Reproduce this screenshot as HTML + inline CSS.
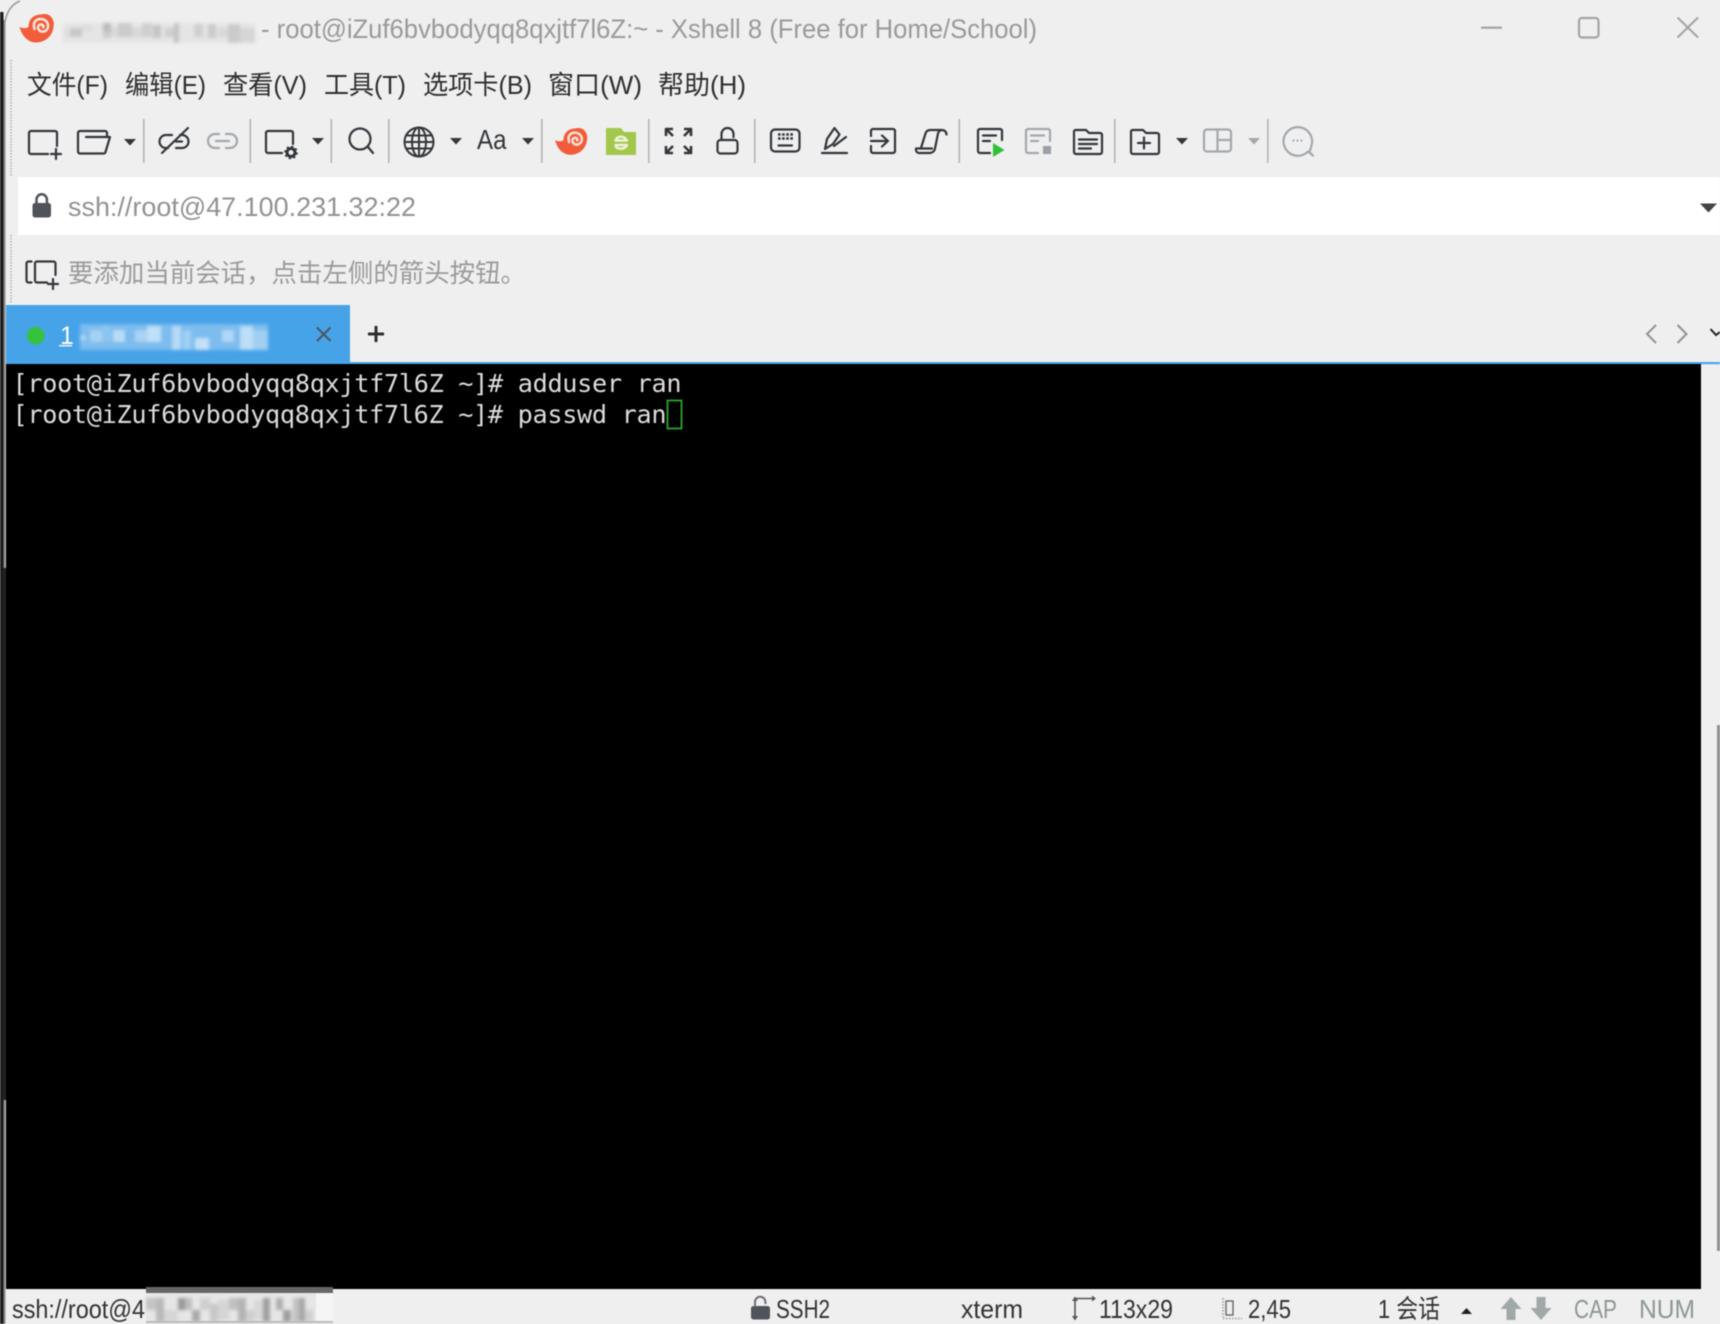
<!DOCTYPE html>
<html lang="zh"><head><meta charset="utf-8"><title>Xshell 8</title>
<style>
html,body{margin:0;padding:0;background:#efefef;width:1720px;height:1324px;overflow:hidden}
svg{display:block;filter:blur(.55px)}
text{font-family:"Liberation Sans","Noto Sans CJK SC",sans-serif}
.m text{font-size:26px;fill:#2e2e2e}
.i{fill:none;stroke:#33363b;stroke-width:2.2;stroke-linecap:round;stroke-linejoin:round}
.g{fill:none;stroke:#a3a8ad;stroke-width:2.2;stroke-linecap:round;stroke-linejoin:round}
.s{fill:#b5b5b5}
.t text{font-family:"DejaVu Sans Mono","Liberation Mono",monospace;font-size:25.2px;fill:#dcdcdc;white-space:pre}
.b text{font-size:26px;fill:#333}
.mz{filter:blur(1.6px)}
</style></head><body>
<svg xmlns="http://www.w3.org/2000/svg" width="1720" height="1324" viewBox="0 0 1720 1324">
<rect width="1720" height="1324" fill="#efefef"/>
<!-- left edge -->
<rect x="0" y="12" width="3.5" height="1312" fill="#1c1c1c"/>
<rect x="3.5" y="20" width="2" height="548" fill="#8a8a8a"/>
<rect x="3.5" y="568" width="2.5" height="532" fill="#222"/>
<rect x="3.5" y="1100" width="2" height="224" fill="#8a8a8a"/>
<path d="M5 22C7 11 12 4 20 1" fill="none" stroke="#999" stroke-width="1.5"/>
<line x1="11" y1="60" x2="11" y2="176" stroke="#bdbdbd" stroke-width="2" stroke-dasharray="1.5 1.5"/>
<line x1="11" y1="235" x2="11" y2="304" stroke="#bdbdbd" stroke-width="2" stroke-dasharray="1.5 1.5"/>

<!-- title -->
<g id="snail">
<path d="M19.5 27C23 28.5 26 28.5 28.5 27C28.5 19 34 14.5 41 14.5C44 13.5 47 14 49 15C53 18 54.5 22 53.5 27C52.5 36 45 42.5 36 42.5C28 42.5 22 36 19.5 27Z" fill="#f25c3b"/>
<path d="M34.5 29C32 21 38 17.500 43.500 19.500C49.500 21.500 49.500 30 44 31.500C39 32.500 36.500 27.500 39 25.200C41 23.500 44 25 43.200 27.200" fill="none" stroke="#fbe3da" stroke-width="2.6" stroke-linecap="round"/>
</g>
<g class="mz">
<rect x="63" y="23" width="192" height="20" fill="#e5e5e5"/>
<rect x="64" y="28" width="9" height="9" fill="#dedede"/><rect x="70" y="28" width="12" height="9" fill="#c9c9c9"/><rect x="82" y="24" width="10" height="8" fill="#dedede"/>
<rect x="103" y="23" width="8" height="8" fill="#bcbcbc"/><rect x="103" y="31" width="8" height="7" fill="#cccccc"/><rect x="111" y="28" width="8" height="8" fill="#d8d8d8"/><rect x="118" y="23" width="14" height="14" fill="#cbcbcb"/><rect x="132" y="28" width="10" height="9" fill="#d8d8d8"/>
<rect x="142" y="23" width="10" height="14" fill="#cfcfcf"/><rect x="153" y="25" width="8" height="13" fill="#c6c6c6"/><rect x="165" y="28" width="9" height="9" fill="#cecece"/><rect x="174" y="23" width="5" height="20" fill="#c4c4c4"/>
<rect x="194" y="24" width="9" height="13" fill="#d0d0d0"/><rect x="208" y="24" width="8" height="14" fill="#cbcbcb"/><rect x="218" y="28" width="10" height="9" fill="#d8d8d8"/><rect x="228" y="24" width="12" height="19" fill="#cbcbcb"/><rect x="240" y="28" width="15" height="15" fill="#d6d6d6"/>
</g>
<text x="261" y="38" font-size="27" fill="#9a9a9a" textLength="776" lengthAdjust="spacingAndGlyphs">- root@iZuf6bvbodyqq8qxjtf7l6Z:~ - Xshell 8 (Free for Home/School)</text>
<!-- window buttons -->
<line x1="1481" y1="27.7" x2="1502" y2="27.7" stroke="#a0a0a0" stroke-width="2.2"/>
<rect x="1579" y="18" width="19.5" height="19.5" rx="3" fill="none" stroke="#a4a4a4" stroke-width="2.2"/>
<path d="M1677.5 17.5L1698 37.5M1698 17.5L1677.5 37.5" stroke="#a4a4a4" stroke-width="2" fill="none"/>

<!-- menu -->
<g class="m">
<text x="27" y="94" textLength="81" lengthAdjust="spacingAndGlyphs">文件(F)</text>
<text x="125" y="94" textLength="81" lengthAdjust="spacingAndGlyphs">编辑(E)</text>
<text x="223" y="94" textLength="84" lengthAdjust="spacingAndGlyphs">查看(V)</text>
<text x="324" y="94" textLength="82" lengthAdjust="spacingAndGlyphs">工具(T)</text>
<text x="423" y="94" textLength="109" lengthAdjust="spacingAndGlyphs">选项卡(B)</text>
<text x="548" y="94" textLength="94" lengthAdjust="spacingAndGlyphs">窗口(W)</text>
<text x="658" y="94" textLength="88" lengthAdjust="spacingAndGlyphs">帮助(H)</text>
</g>

<!-- toolbar separators -->
<g class="s">
<rect x="143" y="119" width="1.6" height="44"/><rect x="249.5" y="119" width="1.6" height="44"/><rect x="330.5" y="119" width="1.6" height="44"/><rect x="388" y="119" width="1.6" height="44"/><rect x="541" y="119" width="1.6" height="44"/><rect x="648" y="119" width="1.6" height="44"/><rect x="754" y="119" width="1.6" height="44"/><rect x="958.5" y="119" width="1.6" height="44"/><rect x="1114" y="119" width="1.6" height="44"/><rect x="1267" y="119" width="1.6" height="44"/>
</g>
<!-- arrows -->
<g fill="#33363b">
<polygon points="124,139 136,139 130,145.5"/><polygon points="312,138 324,138 318,144.5"/><polygon points="450,138 462,138 456,144.5"/><polygon points="522,138 534,138 528,144.5"/><polygon points="1176,138 1188,138 1182,144.5"/>
</g>
<polygon points="1248,138 1260,138 1254,144.5" fill="#a3a8ad"/>

<!-- new session -->
<path class="i" d="M57 146V133a2 2 0 0 0-2-2H31a2 2 0 0 0-2 2V152a2 2 0 0 0 2 2H48M56 149V159M51 154H61"/>
<!-- open folder -->
<path class="i" d="M80 153.5H103.5a2 2 0 0 0 2-1.5L110 137H86M80 153.5a2 2 0 0 1-2-2V133a2 2 0 0 1 2-2H105a2 2 0 0 1 2 2v4"/>
<!-- broken link -->
<path class="i" d="M172 135H166a6.5 6.5 0 0 0 0 13H168M176 148H182a6.5 6.5 0 0 0 0-13H180M162 153L188 128M176 141.5H182"/>
<!-- link -->
<path class="g" d="M219 134H215a7 7 0 0 0 0 14H219M226 134H230a7 7 0 0 1 0 14H226M216 141H229"/>
<!-- session settings -->
<path class="i" d="M293 144V133a2 2 0 0 0-2-2H268a2 2 0 0 0-2 2V151a2 2 0 0 0 2 2H282"/>
<circle cx="291" cy="152.5" r="4" fill="none" stroke="#33363b" stroke-width="3"/>
<circle cx="291" cy="152.5" r="6" fill="none" stroke="#33363b" stroke-width="1.6" stroke-dasharray="2.2 2.5"/>
<!-- search -->
<circle class="i" cx="360" cy="139" r="10.5"/><path class="i" d="M368 147L373 153"/>
<!-- globe -->
<g class="i" style="stroke-width:2"><circle cx="419" cy="142" r="14.5"/><ellipse cx="419" cy="142" rx="7" ry="14.5"/><path d="M405 142H433M407 135.5H431M407 148.5H431M419 127.5V156.5"/></g>
<!-- Aa -->
<text x="477" y="149" font-size="27.500" fill="#33363b" textLength="29.5" lengthAdjust="spacingAndGlyphs">Aa</text>
<!-- snail small -->
<g transform="translate(555 128) scale(.94) translate(-19.5 -14)">
<path d="M19.5 27C23 28.5 26 28.5 28.5 27C28.5 19 34 14.5 41 14.5C44 13.5 47 14 49 15C53 18 54.5 22 53.5 27C52.5 36 45 42.5 36 42.5C28 42.5 22 36 19.5 27Z" fill="#f25c3b"/>
<path d="M34.5 29C32 21 38 17.500 43.500 19.500C49.500 21.500 49.500 30 44 31.500C39 32.500 36.500 27.500 39 25.200C41 23.500 44 25 43.200 27.200" fill="none" stroke="#fbe3da" stroke-width="2.6" stroke-linecap="round"/>
</g>
<!-- green folder -->
<path d="M606 129a1 1 0 0 1 1-1H621l3 4H635a1 1 0 0 1 1 1V154a1 1 0 0 1-1 1H607a1 1 0 0 1-1-1Z" fill="#a3c64c"/>
<path d="M626.500 140C624 135.500 617 135.500 615.500 140.500H627M615.500 145H627C625 149.500 618.500 149.500 616 147" fill="none" stroke="#eef4d8" stroke-width="2.400" stroke-linecap="round" stroke-linejoin="round"/>
<!-- expand -->
<path class="i" style="stroke-width:2.6;stroke-linecap:butt" d="M666 136V129H673M666 129L673 136M684 129H691V136M691 129L684 136M666 146V153H673M666 153L673 146M691 146V153H684M691 153L684 146"/>
<!-- open lock -->
<rect class="i" x="717.500" y="140" width="20" height="13.500" rx="3"/>
<path class="i" d="M721.500 140V134a6 6 0 0 1 12 0V137"/>
<!-- keyboard -->
<rect class="i" x="771" y="129.500" width="28.500" height="22" rx="4"/>
<path d="M778 134.500H793M778 138.500H793" stroke="#33363b" stroke-width="2.6" stroke-dasharray="2.6 1.500" fill="none"/>
<path class="i" d="M778.500 145.500H792"/>
<!-- pen -->
<path class="i" d="M822 153H847M825 149L827 139L834.500 128L839.500 134.500L833 144ZM834 146L846 137"/>
<!-- enter -->
<path class="i" d="M871 136V131a2 2 0 0 1 2-2H893a2 2 0 0 1 2 2V151a2 2 0 0 1-2 2H873a2 2 0 0 1-2-2V146M871 141H887M882 135.500L888 141L882 146.500"/>
<!-- script -->
<path class="i" d="M921 148L925.500 133.500a5 5 0 0 1 4.500-3.500H942a4.500 4.500 0 0 1 4.500 4.500M942 130a4.500 4.500 0 0 0-4 3.500L935 148.500a5.500 5.500 0 0 1-5 4.500H919a3 3 0 0 1-3-3V148.500H932"/>
<!-- play doc -->
<path class="i" d="M990 153H980a2 2 0 0 1-2-2V131a2 2 0 0 1 2-2H1000a2 2 0 0 1 2 2V140M983 135.500H996M983 141H990"/>
<polygon points="993,143 1004.500,150 993,157" fill="#2fc238"/>
<!-- stop doc -->
<path class="g" d="M1038 153H1028a2 2 0 0 1-2-2V131a2 2 0 0 1 2-2H1048a2 2 0 0 1 2 2V141M1031 135.500H1044M1031 141H1038"/>
<rect x="1043" y="146" width="8" height="8" fill="#9aa0a6"/>
<!-- doc folder -->
<path class="i" d="M1074 152V131.500a1.500 1.500 0 0 1 1.500-1.500H1086l3 3H1100a2 2 0 0 1 2 2V152a2 2 0 0 1-2 2H1076a2 2 0 0 1-2-2ZM1079 139.500H1097M1079 144H1097M1079 148.500H1091"/>
<!-- folder plus -->
<path class="i" d="M1131 152V131.500a1.500 1.500 0 0 1 1.500-1.500H1143l3 3H1157a2 2 0 0 1 2 2V152a2 2 0 0 1-2 2H1133a2 2 0 0 1-2-2ZM1138 143H1150M1144 137.500V148.500"/>
<!-- layout -->
<rect class="g" x="1204" y="129.500" width="27" height="22" rx="3"/><path class="g" d="M1217.500 129.500V151.500M1217.500 140H1231"/>
<!-- chat -->
<path class="g" d="M1308 151.500A14.300 14.300 0 1 1 1311 147L1309.500 152.500L1313 155.500Z"/>
<g fill="#a3a8ad"><circle cx="1293.500" cy="140.500" r="1.100"/><circle cx="1297.500" cy="140.500" r="1.100"/><circle cx="1301.500" cy="140.500" r="1.100"/></g>

<!-- address bar -->
<rect x="18" y="177" width="1702" height="58" fill="#fff"/>
<rect x="32.500" y="203" width="18.500" height="14.500" rx="2.500" fill="#50535a"/>
<path d="M36.500 204V199.500a5.200 5.200 0 0 1 10.400 0V204" fill="none" stroke="#50535a" stroke-width="2.500"/>
<text x="68" y="216" font-size="27" fill="#929292" textLength="348" lengthAdjust="spacingAndGlyphs">ssh://root@47.100.231.32:22</text>
<polygon points="1700,203.500 1717,203.500 1708.500,212.500" fill="#444"/>

<!-- hint bar -->
<path class="i" d="M31.500 261.500H28.500a2 2 0 0 0-2 2V280.500a2 2 0 0 0 2 2H31.500M55.500 275V263.500a2 2 0 0 0-2-2H37a2 2 0 0 0-2 2V280.500a2 2 0 0 0 2 2H47M53 279V289M48 284H58" style="stroke-width:2.200"/>
<text x="68" y="282" font-size="25.500" fill="#9a9a9a" textLength="458" lengthAdjust="spacingAndGlyphs">要添加当前会话，点击左侧的箭头按钮。</text>

<!-- tab -->
<rect x="6" y="305" width="344" height="58" fill="#47a3e8"/>
<circle cx="35.700" cy="335.700" r="8.800" fill="#35c23c"/>
<text x="60" y="344" font-size="25" fill="#fff">1</text>
<rect x="59" y="345" width="13" height="1.500" fill="#e4f2fc"/>
<g class="mz">
<rect x="80" y="324" width="188" height="26" fill="#7dbcee"/>
<rect x="80" y="335" width="6" height="6" fill="#a8d3f3"/><rect x="90" y="330" width="12" height="12" fill="#a5d2f3"/><rect x="102" y="326" width="9" height="16" fill="#8cc5ef"/><rect x="113" y="330" width="12" height="12" fill="#b9dcf6"/><rect x="135" y="330" width="12" height="12" fill="#a8d3f3"/>
<rect x="147" y="326" width="14" height="16" fill="#c0e0f7"/><rect x="172" y="326" width="9" height="24" fill="#b5daf5"/><rect x="183" y="330" width="8" height="20" fill="#a0cff2"/><rect x="195" y="338" width="14" height="12" fill="#c4e1f7"/><rect x="222" y="330" width="12" height="12" fill="#b0d7f5"/><rect x="240" y="326" width="13" height="24" fill="#bcdef6"/><rect x="253" y="330" width="15" height="20" fill="#a0cff2"/>
</g>
<path d="M317 327.500L330.500 341M330.500 327.500L317 341" stroke="#4a5560" stroke-width="2" fill="none"/>
<path d="M368 334H384M376 326V342" stroke="#2e2e2e" stroke-width="3" fill="none"/>
<!-- nav -->
<path d="M1656 325L1647 334L1656 343" fill="none" stroke="#8e9298" stroke-width="2"/>
<path d="M1677.500 325L1686.500 334L1677.500 343" fill="none" stroke="#8e9298" stroke-width="2"/>
<path d="M1710.500 329L1716 335L1720 332" fill="none" stroke="#222" stroke-width="2"/>

<!-- terminal -->
<rect x="6" y="362" width="1714" height="2.200" fill="#4aa5e8"/>
<rect x="6" y="364" width="1695" height="925" fill="#000"/>
<g class="t">
<text x="12.500" y="392" textLength="669" lengthAdjust="spacing" xml:space="preserve">[root@iZuf6bvbodyqq8qxjtf7l6Z ~]# adduser ran</text>
<text x="12.500" y="423" textLength="654" lengthAdjust="spacing" xml:space="preserve">[root@iZuf6bvbodyqq8qxjtf7l6Z ~]# passwd ran</text>
</g>
<rect x="667.500" y="400.500" width="14" height="28" fill="none" stroke="#2aa52a" stroke-width="1.800"/>
<!-- scrollbar -->
<rect x="1717" y="725" width="3" height="526" rx="1" fill="#8f8f8f"/>

<!-- status bar -->
<rect x="146" y="1287" width="187" height="6" fill="#666"/>
<rect x="146" y="1293" width="187" height="29" fill="#e6e6e6"/>
<g class="mz">
<rect x="146" y="1298" width="10" height="12" fill="#c4c4c4"/><rect x="156" y="1298" width="8" height="24" fill="#b9b9b9"/><rect x="164" y="1310" width="14" height="12" fill="#d6d6d6"/><rect x="178" y="1298" width="7" height="12" fill="#999"/><rect x="185" y="1298" width="7" height="12" fill="#bdbdbd"/><rect x="192" y="1310" width="8" height="12" fill="#aaa"/><rect x="200" y="1298" width="10" height="12" fill="#cfcfcf"/><rect x="210" y="1304" width="8" height="18" fill="#c8c8c8"/>
<rect x="218" y="1300" width="11" height="20" fill="#d5d5d5"/><rect x="229" y="1298" width="9" height="12" fill="#bfbfbf"/><rect x="238" y="1298" width="8" height="24" fill="#b4b4b4"/><rect x="246" y="1310" width="8" height="12" fill="#cfcfcf"/><rect x="254" y="1300" width="9" height="20" fill="#d8d8d8"/><rect x="263" y="1298" width="7" height="24" fill="#a0a0a0"/><rect x="276" y="1298" width="7" height="12" fill="#b0b0b0"/><rect x="283" y="1310" width="8" height="12" fill="#9f9f9f"/><rect x="293" y="1298" width="6" height="24" fill="#c2c2c2"/><rect x="299" y="1298" width="6" height="24" fill="#a8a8a8"/><rect x="305" y="1310" width="8" height="12" fill="#d0d0d0"/>
</g>
<rect x="316" y="1293" width="17" height="29" fill="#f5f5f5"/>
<rect x="146" y="1321" width="187" height="2" fill="#bbb"/>
<g class="b">
<text x="12" y="1318" textLength="133" lengthAdjust="spacingAndGlyphs">ssh://root@4</text>
<text x="776" y="1318" textLength="54" lengthAdjust="spacingAndGlyphs">SSH2</text>
<text x="961" y="1318" textLength="62" lengthAdjust="spacingAndGlyphs">xterm</text>
<text x="1099" y="1318" textLength="74" lengthAdjust="spacingAndGlyphs">113x29</text>
<text x="1248" y="1318" textLength="43" lengthAdjust="spacingAndGlyphs">2,45</text>
<text x="1378" y="1318" textLength="62" lengthAdjust="spacingAndGlyphs">1 会话</text>
<text x="1574" y="1318" textLength="43" lengthAdjust="spacingAndGlyphs" style="fill:#8e9696">CAP</text>
<text x="1639" y="1318" textLength="56" lengthAdjust="spacingAndGlyphs" style="fill:#8e9696">NUM</text>
</g>
<rect x="751" y="1306" width="19" height="13.500" rx="2.500" fill="#50535a"/>
<path d="M755 1307V1302a5.200 5.200 0 0 1 10.400 0V1304" fill="none" stroke="#6b6e74" stroke-width="2"/>
<path d="M1075 1299V1318M1075 1298.500H1094" fill="none" stroke="#555" stroke-width="1.600"/>
<polygon points="1072,1301 1078,1301 1075,1296.500" fill="#555"/><polygon points="1072,1316 1078,1316 1075,1320.500" fill="#555"/><polygon points="1092,1295.500 1092,1301.500 1096,1298.500" fill="#555"/>
<rect x="1226" y="1301" width="7" height="14" fill="none" stroke="#666" stroke-width="1.400"/>
<path d="M1223 1298V1317M1223 1318.500H1242" fill="none" stroke="#999" stroke-width="1.500" stroke-dasharray="1.500 1.500"/>
<polygon points="1461,1314 1472,1314 1466.500,1308" fill="#222"/>
<polygon points="1511,1297 1521.500,1309 1515.500,1309 1515.500,1320 1506.500,1320 1506.500,1309 1500.500,1309" fill="#a0a8a8"/>
<polygon points="1541,1320 1551.500,1308 1545.500,1308 1545.500,1297 1536.500,1297 1536.500,1308 1530.500,1308" fill="#a0a8a8"/>
</svg>
</body></html>
